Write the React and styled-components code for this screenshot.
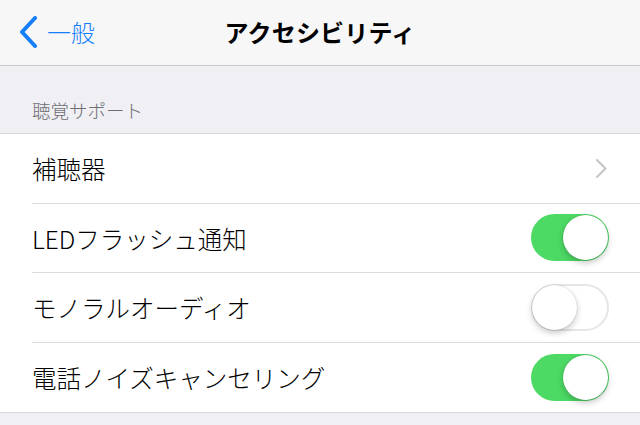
import React from "react";
import styled, { createGlobalStyle } from "styled-components";

const GlobalStyle = createGlobalStyle`
  html, body {
    margin: 0;
    padding: 0;
    background: #efeff4;
  }
  body {
    font-family: "Noto Sans CJK JP", "Noto Sans", sans-serif;
    -webkit-font-smoothing: antialiased;
  }
`;

const Screen = styled.div`
  width: 640px;
  height: 425px;
  overflow: hidden;
  background: #efeff4;
`;

const NavBar = styled.header`
  position: relative;
  height: 66px;
  background: #f7f7f8;
  border-bottom: 1px solid #c8c7cc;
  display: flex;
  align-items: center;
  justify-content: center;
  box-sizing: border-box;
`;

const BackButton = styled.div`
  position: absolute;
  left: 18px;
  top: 0;
  bottom: 0;
  display: flex;
  align-items: center;
  gap: 9px;
  color: #157efb;
  font-size: 24px;
  font-weight: 300;
  padding-bottom: 2px;
`;

const Title = styled.h1`
  margin: 0 0 2px 0;
  font-size: 24px;
  font-weight: 700;
  color: #000;
  letter-spacing: 0.2px;
`;

const SectionHeader = styled.div`
  height: 68px;
  box-sizing: border-box;
  padding: 31px 0 0 32px;
  font-size: 18.5px;
  font-weight: 300;
  color: #6d6d72;
  border-bottom: 1px solid #d6d6da;
`;

const Group = styled.div`
  background: #fff;
  border-bottom: 1px solid #d6d6da;
`;

const Row = styled.div`
  height: 69.5px;
  display: flex;
  align-items: center;
  padding-left: 32px;
  box-sizing: border-box;
`;

const RowInner = styled.div`
  flex: 1;
  height: 100%;
  display: flex;
  align-items: center;
  justify-content: space-between;
  padding-right: 31px;
  border-bottom: ${(p) => (p.last ? "none" : "1px solid #dcdce0")};
  box-sizing: border-box;
`;

const Label = styled.span`
  font-size: 24.5px;
  font-weight: 300;
  color: #000;
  padding-top: 1px;
`;

const Chevron = styled.svg`
  margin-right: 1px;
`;

const Track = styled.div`
  position: relative;
  width: 78px;
  height: 47px;
  border-radius: 24px;
  box-sizing: border-box;
  background: ${(p) => (p.on ? "#4cd964" : "#fff")};
  border: ${(p) => (p.on ? "none" : "2px solid #e5e5ea")};
`;

const Knob = styled.div`
  position: absolute;
  top: ${(p) => (p.on ? "1px" : "-1px")};
  ${(p) => (p.on ? "right: 1px;" : "left: -1px;")}
  width: 45px;
  height: 45px;
  border-radius: 50%;
  background: #fff;
  box-shadow: 0 3px 6px rgba(0, 0, 0, 0.22), 0 0 0 0.5px rgba(0, 0, 0, 0.12);
`;

function Toggle({ on }) {
  return (
    <Track on={on ? 1 : 0}>
      <Knob on={on ? 1 : 0} />
    </Track>
  );
}

const rows = [
  { label: "補聴器", type: "link" },
  { label: "LEDフラッシュ通知", type: "toggle", on: true },
  { label: "モノラルオーディオ", type: "toggle", on: false },
  { label: "電話ノイズキャンセリング", type: "toggle", on: true },
];

export default function App() {
  return (
    <Screen>
      <GlobalStyle />
      <NavBar>
        <BackButton>
          <svg width="20" height="32" viewBox="0 0 20 32">
            <path
              d="M17 2 L4 16 L17 30"
              fill="none"
              stroke="#157efb"
              strokeWidth="4"
              strokeLinecap="round"
              strokeLinejoin="round"
            />
          </svg>
          <span>一般</span>
        </BackButton>
        <Title>アクセシビリティ</Title>
      </NavBar>
      <SectionHeader>聴覚サポート</SectionHeader>
      <Group>
        {rows.map((r, i) => (
          <Row key={r.label}>
            <RowInner last={i === rows.length - 1 ? 1 : 0}>
              <Label>{r.label}</Label>
              {r.type === "link" ? (
                <Chevron width="13" height="21" viewBox="0 0 13 21">
                  <path
                    d="M2 2 L10.5 10.5 L2 19"
                    fill="none"
                    stroke="#c7c7cc"
                    strokeWidth="2.2"
                    strokeLinecap="round"
                    strokeLinejoin="round"
                  />
                </Chevron>
              ) : (
                <Toggle on={r.on} />
              )}
            </RowInner>
          </Row>
        ))}
      </Group>
    </Screen>
  );
}
